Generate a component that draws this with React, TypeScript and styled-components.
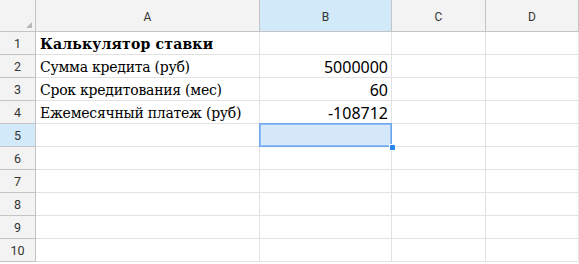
import React from "react";
import styled, { createGlobalStyle } from "styled-components";

const Global = createGlobalStyle`
  html, body { margin: 0; padding: 0; background: #fff; }
  body { width: 579px; height: 264px; overflow: hidden; }
`;

const COLS = [36, 224, 132, 94, 93];
const HEADER_H = 32;
const ROW_H = 23;

const Grid = styled.div`
  display: grid;
  grid-template-columns: ${COLS.map((c) => c + "px").join(" ")};
  grid-template-rows: ${HEADER_H}px repeat(10, ${ROW_H}px);
  width: 579px;
  height: 264px;
  overflow: hidden;
`;

const Corner = styled.div`
  position: relative;
  box-sizing: border-box;
  background: #f3f3f3;
  border-right: 1px solid #c4c4c4;
  border-bottom: 1px solid #c4c4c4;
  &::after {
    content: "";
    position: absolute;
    right: 3px;
    bottom: 3px;
    width: 0;
    height: 0;
    border-left: 6px solid transparent;
    border-bottom: 6px solid #b8b8b8;
  }
`;

const ColHeader = styled.div<{ $active?: boolean }>`
  box-sizing: border-box;
  display: flex;
  align-items: center;
  justify-content: center;
  padding-top: 2px;
  background: ${(p) => (p.$active ? "#d2e9fa" : "#f3f3f3")};
  border-right: 1px solid #c4c4c4;
  border-bottom: 1px solid #c4c4c4;
  font-family: Roboto, "Liberation Sans", sans-serif;
  font-size: 12px;
  color: #333;
`;

const RowHeader = styled.div<{ $active?: boolean }>`
  box-sizing: border-box;
  display: flex;
  align-items: center;
  justify-content: center;
  background: ${(p) => (p.$active ? "#d2e9fa" : "#f3f3f3")};
  border-right: 1px solid #c4c4c4;
  border-bottom: 1px solid #c4c4c4;
  font-family: Roboto, "Liberation Sans", sans-serif;
  font-size: 12.5px;
  color: #333;
`;

const Cell = styled.div<{ $align?: "left" | "right"; $bold?: boolean; $num?: boolean }>`
  position: relative;
  box-sizing: border-box;
  display: flex;
  align-items: center;
  justify-content: ${(p) => (p.$align === "right" ? "flex-end" : "flex-start")};
  padding: 1px 3px 0 4px;
  border-right: 1px solid #e2e2e2;
  border-bottom: 1px solid #e2e2e2;
  white-space: nowrap;
  font-family: ${(p) =>
    p.$num ? '"Noto Sans", Roboto, sans-serif' : '"DejaVu Serif", serif'};
  font-size: ${(p) => (p.$num ? "16px" : "14px")};
  letter-spacing: ${(p) => (p.$num ? "0" : p.$bold ? "0.2px" : "-0.25px")};
  font-weight: ${(p) => (p.$bold ? 700 : 400)};
  color: #000;
`;

const Selection = styled.div`
  position: absolute;
  left: -1px;
  top: -1px;
  right: -1px;
  bottom: -1px;
  background: #d6e9fb;
  border: 1px solid #6aa7ee;
  box-shadow: inset 0 0 0 1px #8fbdf2;
  z-index: 2;
`;

const Handle = styled.div`
  position: absolute;
  right: -5px;
  bottom: -5px;
  width: 7px;
  height: 7px;
  background: #2a86f0;
  border: 1px solid #fff;
  box-sizing: border-box;
  z-index: 3;
`;

type Row = { a?: string; b?: string; bold?: boolean };

const rows: Row[] = [
  { a: "Калькулятор ставки", bold: true },
  { a: "Сумма кредита (руб)", b: "5000000" },
  { a: "Срок кредитования (мес)", b: "60" },
  { a: "Ежемесячный платеж (руб)", b: "-108712" },
  {},
  {},
  {},
  {},
  {},
  {},
];

export default function App() {
  return (
    <>
      <Global />
      <Grid>
        <Corner />
        <ColHeader>A</ColHeader>
        <ColHeader $active>B</ColHeader>
        <ColHeader>C</ColHeader>
        <ColHeader>D</ColHeader>
        {rows.map((r, i) => (
          <React.Fragment key={i}>
            <RowHeader $active={i === 4}>{i + 1}</RowHeader>
            <Cell $bold={r.bold}>{r.a}</Cell>
            <Cell $align="right" $num>
              {r.b}
              {i === 4 && (
                <Selection>
                  <Handle />
                </Selection>
              )}
            </Cell>
            <Cell />
            <Cell />
          </React.Fragment>
        ))}
      </Grid>
    </>
  );
}
